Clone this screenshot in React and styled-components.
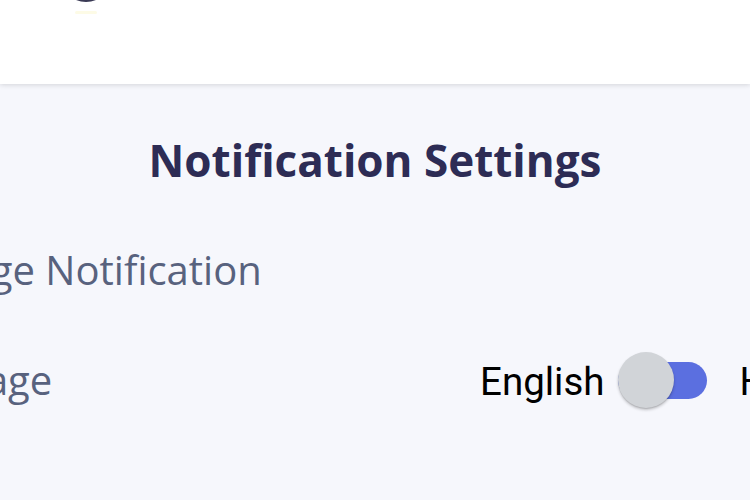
import styled, { createGlobalStyle } from 'styled-components';

const GlobalStyle = createGlobalStyle`
  html, body {
    margin: 0;
    padding: 0;
    background-color: #f6f7fc;
    overflow: hidden;
  }
`;

const Page = styled.div`
  width: 750px;
  height: 500px;
  overflow: hidden;
  background-color: #f6f7fc;
  font-family: 'Open Sans', 'Liberation Sans', sans-serif;
`;

const Header = styled.header`
  height: 84px;
  background-color: #fff;
  box-shadow: 0 1px 5px rgba(0, 0, 0, 0.14);
  display: flex;
  align-items: flex-start;
  padding-left: 74px;
  position: relative;
  z-index: 1;
`;

const LogoTail = styled.svg`
  display: block;
`;

const Content = styled.main`
  padding-top: 54px;
  display: flex;
  flex-direction: column;
`;

const Title = styled.h1`
  margin: 0;
  font-size: 44px;
  line-height: 44px;
  font-weight: 700;
  color: #2d2c55;
  text-align: center;
`;

const SettingsList = styled.section`
  margin: 60px 0 0 -128px;
  display: flex;
  flex-direction: column;
  gap: 54px;
`;

const Row = styled.div`
  height: 56px;
  display: grid;
  grid-template-columns: 608px auto;
  align-items: center;
`;

const Label = styled.span`
  font-size: 40px;
  line-height: 40px;
  color: #58627e;
  white-space: nowrap;
`;

const Options = styled.div`
  display: flex;
  align-items: center;
`;

const Option = styled.span`
  font-family: Roboto, 'Liberation Sans', sans-serif;
  font-size: 38.5px;
  line-height: 40px;
  padding-top: 4px;
  color: #000;
  white-space: nowrap;
`;

const Switch = styled.div`
  position: relative;
  flex: none;
  width: 89px;
  height: 37px;
  margin: 0 33px 0 13px;
  border-radius: 19px;
  background-color: ${({ $on }) => ($on ? '#5b6fe0' : '#b8bcc4')};
`;

const Thumb = styled.span`
  position: absolute;
  top: -10px;
  left: 0;
  width: 56px;
  height: 56px;
  border-radius: 50%;
  background-color: #d1d4d8;
  box-shadow: 0 2px 3px rgba(0, 0, 0, 0.22), 0 1px 1px rgba(0, 0, 0, 0.1);
`;

const App = () => {
  return (
    <Page>
      <GlobalStyle />
      <Header>
        <LogoTail width="30" height="16" viewBox="0 0 30 16">
          <path d="M2 0 Q12 4 22 0 Z" fill="#3a3a55" />
          <rect x="1" y="11" width="22" height="3" rx="1.5" fill="#fdfbe6" />
        </LogoTail>
      </Header>
      <Content>
        <Title>Notification Settings</Title>
        <SettingsList>
          <Row>
            <Label>Message Notification</Label>
          </Row>
          <Row>
            <Label>Language</Label>
            <Options>
              <Option>English</Option>
              <Switch $on>
                <Thumb />
              </Switch>
              <Option>Hindi</Option>
            </Options>
          </Row>
        </SettingsList>
      </Content>
    </Page>
  );
};

export default App;
